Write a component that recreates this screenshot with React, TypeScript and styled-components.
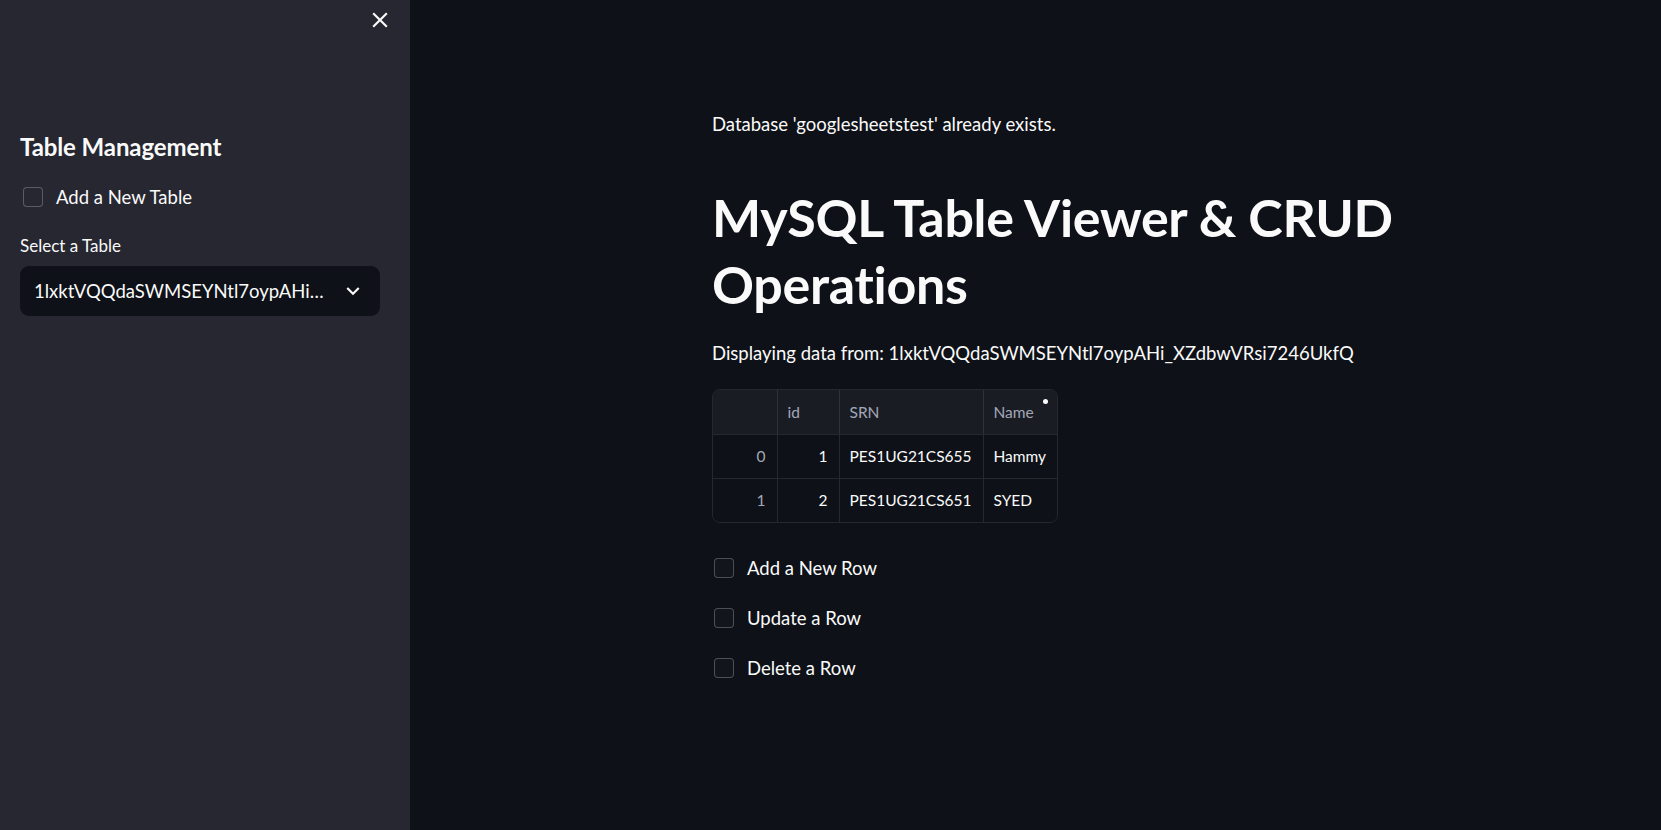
import React from "react";
import styled, { createGlobalStyle } from "styled-components";

const Global = createGlobalStyle`
  html, body { margin: 0; padding: 0; background: #0e1117; }
  body { font-family: Lato, "Noto Sans", sans-serif; color: #fafafa; }
  * { box-sizing: border-box; }
`;

const Shell = styled.div`
  display: flex;
  width: 100%;
  height: 830px;
  overflow: hidden;
`;

const Sidebar = styled.aside`
  width: 410px;
  flex: none;
  background: #262730;
  display: flex;
  flex-direction: column;
  padding: 0 30px 0 20px;
`;

const SideTop = styled.div`
  height: 39px;
  display: flex;
  justify-content: flex-end;
  align-items: center;
  margin-right: -13px;
`;

const IconButton = styled.button`
  background: none;
  border: none;
  padding: 0;
  width: 26px;
  height: 26px;
  display: flex;
  align-items: center;
  justify-content: center;
  color: #fafafa;
  cursor: pointer;
`;

const SideHeading = styled.h3`
  margin: 93px 0 0;
  font-size: 24px;
  font-weight: 700;
  line-height: 30px;
  letter-spacing: -0.1px;
`;

const Check = styled.label<{ $side?: boolean }>`
  display: flex;
  align-items: center;
  gap: 13px;
  height: 50px;
  padding-left: ${(p) => (p.$side ? "3px" : "2px")};
  font-size: 18.5px;
  cursor: pointer;
`;

const Box = styled.span<{ $side?: boolean }>`
  width: 20px;
  height: 20px;
  border-radius: 4px;
  border: 1px solid rgba(250, 250, 250, 0.25);
  background: ${(p) => (p.$side ? "#262730" : "#12151c")};
  flex: none;
`;

const SideCheck = styled(Check)`
  margin-top: 10px;
`;

const FieldLabel = styled.div`
  margin-top: 14px;
  font-size: 17px;
  line-height: 20px;
`;

const Select = styled.div`
  margin-top: 10px;
  height: 50px;
  border-radius: 9px;
  background: #0e1117;
  display: flex;
  align-items: center;
  justify-content: space-between;
  padding: 0 14px 0 14px;
  font-size: 18.5px;
`;

const SelectValue = styled.span`
  white-space: nowrap;
  overflow: hidden;
  text-overflow: ellipsis;
  max-width: 298px;
`;

const Main = styled.main`
  flex: 1;
  padding: 108px 0 0 302px;
`;

const Column = styled.div`
  width: 740px;
  display: flex;
  flex-direction: column;
`;

const Para = styled.p`
  margin: 0;
  font-size: 18.5px;
  line-height: 32px;
`;

const Title = styled.h1`
  margin: 44px 0 19px;
  font-size: 52px;
  font-weight: 700;
  line-height: 67px;
  letter-spacing: -0.3px;
`;

const TableWrap = styled.div`
  margin-top: 20px;
  width: 346px;
  border: 1px solid rgba(250, 250, 250, 0.1);
  border-radius: 8px;
  overflow: hidden;
  position: relative;
`;

const Grid = styled.table`
  border-collapse: collapse;
  table-layout: fixed;
  width: 100%;
  font-size: 15.5px;
`;

const Th = styled.th<{ $w: number }>`
  width: ${(p) => p.$w}px;
  height: 44px;
  background: #1a1c24;
  color: #a3a8b8;
  font-weight: 400;
  text-align: left;
  padding: 0 10px;
  border-right: 1px solid rgba(250, 250, 250, 0.1);
  &:last-child { border-right: none; }
`;

const Td = styled.td<{ $num?: boolean; $index?: boolean }>`
  height: 44px;
  background: #0e1117;
  color: ${(p) => (p.$index ? "#a3a8b8" : "#fafafa")};
  text-align: ${(p) => (p.$num ? "right" : "left")};
  padding: 0 11px 0 10px;
  white-space: nowrap;
  border-top: 1px solid rgba(250, 250, 250, 0.1);
  border-right: 1px solid rgba(250, 250, 250, 0.1);
  &:last-child { border-right: none; }
`;

const Dot = styled.span`
  position: absolute;
  top: 9px;
  right: 9px;
  width: 5px;
  height: 5px;
  border-radius: 50%;
  background: #fafafa;
`;

const Checks = styled.div`
  margin-top: 20px;
  display: flex;
  flex-direction: column;
`;

const rows = [
  { i: 0, id: 1, srn: "PES1UG21CS655", name: "Hammy" },
  { i: 1, id: 2, srn: "PES1UG21CS651", name: "SYED" },
];

export default function App() {
  return (
    <Shell>
      <Global />
      <Sidebar>
        <SideTop>
          <IconButton aria-label="Close sidebar">
            <svg width="26" height="26" viewBox="0 0 24 24" fill="currentColor">
              <path d="M19 6.41L17.59 5 12 10.59 6.41 5 5 6.41 10.59 12 5 17.59 6.41 19 12 13.41 17.59 19 19 17.59 13.41 12z" />
            </svg>
          </IconButton>
        </SideTop>
        <SideHeading>Table Management</SideHeading>
        <SideCheck $side>
          <Box $side />
          Add a New Table
        </SideCheck>
        <FieldLabel>Select a Table</FieldLabel>
        <Select>
          <SelectValue>1lxktVQQdaSWMSEYNtl7oypAHi_XZdbwVRsi7246UkfQ</SelectValue>
          <svg width="26" height="26" viewBox="0 0 24 24" fill="#fafafa">
            <path d="M7.41 8.59L12 13.17l4.59-4.58L18 10l-6 6-6-6 1.41-1.41z" />
          </svg>
        </Select>
      </Sidebar>
      <Main>
        <Column>
          <Para>Database 'googlesheetstest' already exists.</Para>
          <Title>MySQL Table Viewer &amp; CRUD Operations</Title>
          <Para>Displaying data from: 1lxktVQQdaSWMSEYNtl7oypAHi_XZdbwVRsi7246UkfQ</Para>
          <TableWrap>
            <Dot />
            <Grid>
              <thead>
                <tr>
                  <Th $w={64}></Th>
                  <Th $w={62}>id</Th>
                  <Th $w={144}>SRN</Th>
                  <Th $w={76}>Name</Th>
                </tr>
              </thead>
              <tbody>
                {rows.map((r) => (
                  <tr key={r.i}>
                    <Td $num $index>{r.i}</Td>
                    <Td $num>{r.id}</Td>
                    <Td>{r.srn}</Td>
                    <Td>{r.name}</Td>
                  </tr>
                ))}
              </tbody>
            </Grid>
          </TableWrap>
          <Checks>
            <Check><Box />Add a New Row</Check>
            <Check><Box />Update a Row</Check>
            <Check><Box />Delete a Row</Check>
          </Checks>
        </Column>
      </Main>
    </Shell>
  );
}
